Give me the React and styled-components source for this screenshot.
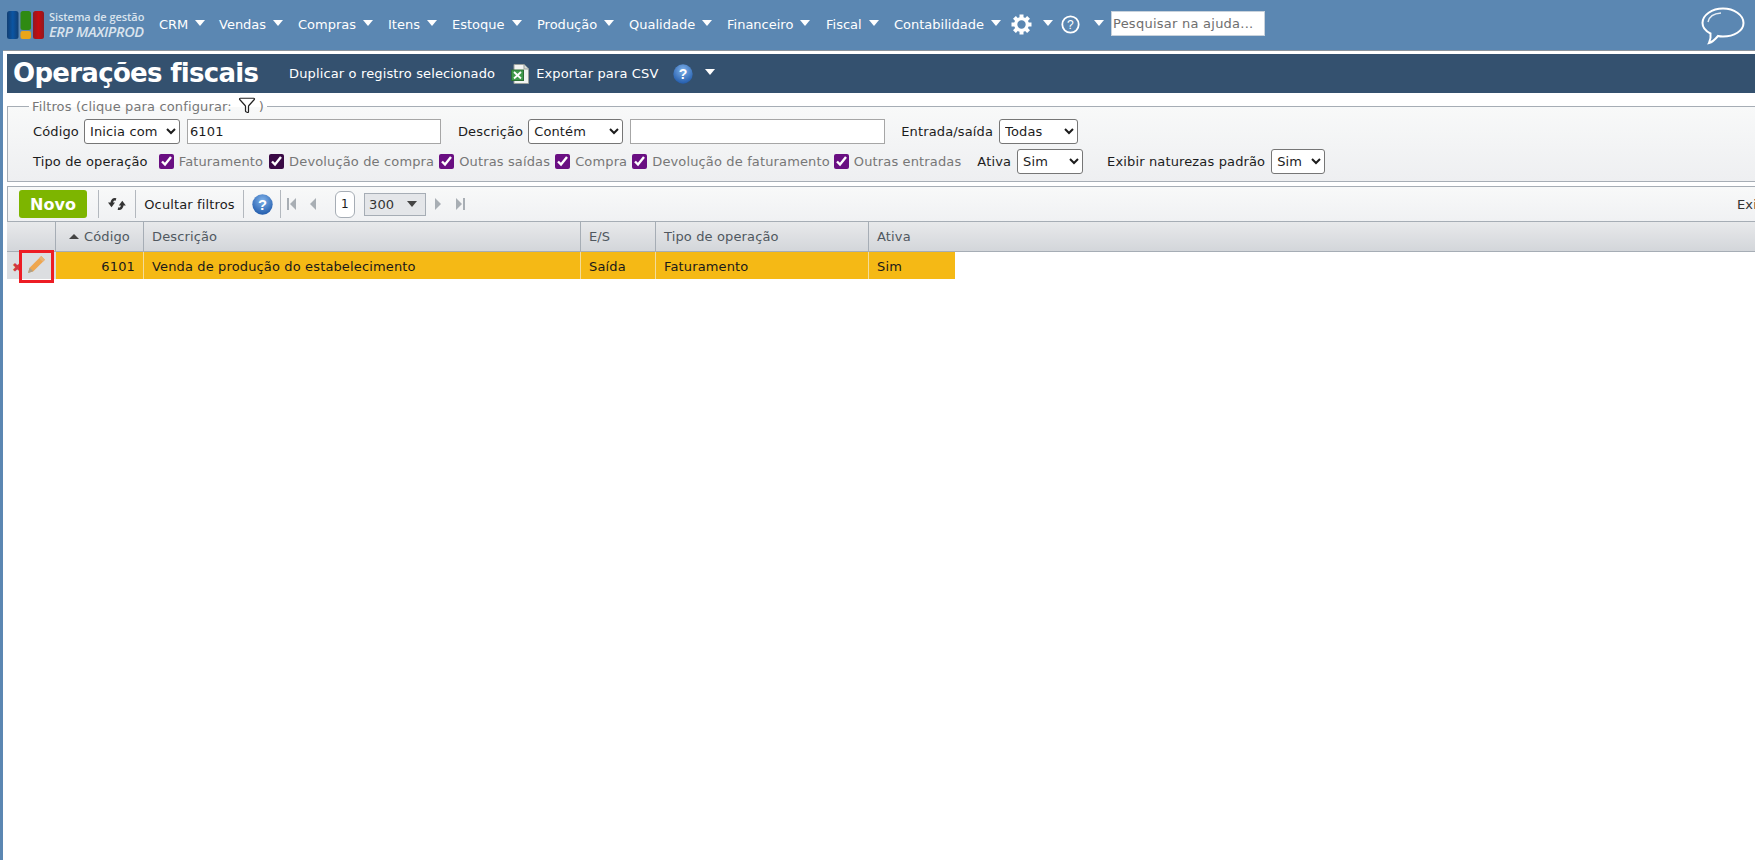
import React from "react";
import styled, { createGlobalStyle } from "styled-components";
import { Filter } from "lucide-react";

const Global = createGlobalStyle`
  html, body { margin: 0; padding: 0; height: 860px; overflow: hidden; background: #fff; }
  body { font-family: "DejaVu Sans", Verdana, sans-serif; font-size: 13px; letter-spacing: 0.14px; }
  * { box-sizing: border-box; }
`;

const Page = styled.div`
  width: 1755px; height: 860px; overflow: hidden; display: flex; flex-direction: column;
  background: #fff; border-left: 3px solid #5b87b2;
`;
const TopBar = styled.header`
  height: 51px; margin-left: -3px; flex: none; background: #5b87b2; border-bottom: 1px solid #8a949e;
  display: flex; align-items: center; position: relative; color: #fff;
`;
const Logo = styled.div`
  width: 159px; padding-left: 7px; display: flex; align-items: center; gap: 5px; flex: none;
`;
const LogoText = styled.div`
  font-family: "Open Sans", sans-serif; display: flex; flex-direction: column; color: #d9e3ed; letter-spacing: 0;
`;
const LogoTop = styled.span`font-size: 11px; font-weight: 600; line-height: 13px; letter-spacing: -0.05px;`;
const LogoBottom = styled.span`font-size: 14.5px; font-weight: 600; font-style: italic; line-height: 17px; letter-spacing: -0.4px;`;
const Menu = styled.nav`display: flex; align-items: center; height: 100%;`;
const MenuItem = styled.div`
  display: flex; align-items: center; gap: 7px; font-size: 13px; color: #fff; white-space: nowrap; letter-spacing: 0;
  width: ${p => p.$w}px; padding-bottom: 1px;
`;
const Caret = styled.span`
  width: 0; height: 0; border-left: 5.5px solid transparent; border-right: 5.5px solid transparent;
  border-top: 6px solid ${p => p.$color || "#fff"}; flex: none; margin-bottom: 4px;
`;
const IconMenu = styled.div`
  display: flex; align-items: center; width: ${p => p.$w}px; gap: ${p => p.$gap}px; padding-bottom: 1px;
`;
const SearchBox = styled.input`
  width: 154px; height: 25px; border: 1px solid #c8d2dc; background: #fff; padding: 0 1px;
  font: 13px "DejaVu Sans", sans-serif; letter-spacing: 0.25px; margin-bottom: 3px;
  &::placeholder { color: #6e6e6e; opacity: 1; }
`;
const Bubble = styled.svg`position: absolute; left: 1701px; top: 7px;`;
const Gap = styled.div`height: 3px; flex: none;`;
const TitleBar = styled.div`
  height: 39px; margin-left: 4px; flex: none; background: #34516f; display: flex; align-items: center; color: #fff;
`;
const Title = styled.h1`
  margin: 0 0 1px 6px; font-size: 26px; font-weight: 700; width: 276px; white-space: nowrap; letter-spacing: -0.7px;
  font-family: "DejaVu Sans", sans-serif;
`;
const TitleAction = styled.span`
  font-size: 13px; white-space: nowrap; display: flex; align-items: center; gap: 6px; margin-right: ${p => p.$mr}px;
`;
const Filters = styled.fieldset`
  margin: 6px 0 0 4px; padding: 0 0 0 25px; height: 83px; flex: none; border: 1px solid #a6adb5; border-right: 0;
  background: linear-gradient(#f8f9f9, #eeeff1); min-width: 0; display: block; position: relative;
`;
const Legend = styled.legend`
  color: #777; font-size: 13px; padding: 0 3px; margin-left: -4px; display: flex; align-items: center; height: 15px; line-height: 15px;
`;
const FilterIcon = styled(Filter)`margin: -3px 3px 0 6px;`;
const FilterRow = styled.div`
  display: flex; align-items: center; height: ${p => p.$h}px; margin-top: ${p => p.$mt || 0}px; white-space: nowrap;
`;
const Label = styled.label`
  color: #1c1c1c; font-size: 13px; margin-right: ${p => p.$mr}px; margin-left: ${p => p.$ml || 0}px;
`;
const Select = styled.select`
  width: ${p => p.$w}px; height: 25px; font: 13px "DejaVu Sans", sans-serif; letter-spacing: 0.14px; background: #fff; color: #1c1c1c;
  border: 1px solid #767676; border-radius: 3px; padding: 0 1px; margin-right: ${p => p.$mr || 0}px;
`;
const TextBox = styled.input`
  width: ${p => p.$w}px; height: 25px; font: 13px "DejaVu Sans", sans-serif; letter-spacing: 0.14px; color: #1c1c1c; background: #fff;
  border: 1px solid #a6a6a6; padding: 0 2px; margin-right: ${p => p.$mr || 0}px;
`;
const Check = styled.input`
  width: 15px; height: 15px; margin: 0 5px 0 ${p => p.$ml}px; accent-color: ${p => p.$color}; flex: none;
`;
const CheckText = styled.span`color: #777; font-size: 13px;`;
const Toolbar = styled.div`
  height: 35px; margin: 4px 0 0 4px; flex: none; display: flex; align-items: center;
  border-top: 1px solid #a6adb5; border-left: 1px solid #a6adb5;
  background: linear-gradient(#f8f9f9, #f0f1f3); color: #1c1c1c; font-size: 13px; padding-left: 11px;
`;
const NewButton = styled.button`
  width: 68px; height: 28px; border: 0; border-radius: 3px; background: #7db500; color: #fff; flex: none;
  font: 700 16px "DejaVu Sans", sans-serif; padding: 0; margin-right: 11px;
`;
const ToolSep = styled.span`width: 1px; height: 28px; background: #b3b8be; flex: none;`;
const ToolCell = styled.div`
  display: flex; align-items: center; justify-content: center; width: ${p => p.$w}px; flex: none; white-space: nowrap; height: 28px;
`;
const PageNum = styled.div`
  width: 20px; height: 27px; border: 1px solid #a6adb5; border-radius: 6px; background: #fff; flex: none;
  display: flex; align-items: center; justify-content: center; margin: 0 9px 0 19px; font-size: 12px;
`;
const PageSize = styled.div`
  width: 62px; height: 23px; border: 1px solid #a6adb5; background: #e4e6e9; flex: none; display: flex; align-items: center;
  justify-content: space-between; padding: 0 8px 0 4px; font-size: 13px; margin-right: 9px; color: #333;
`;
const Pager = styled.svg`flex: none; margin: ${p => p.$m};`;
const Spacer = styled.div`flex: 1;`;
const ClippedText = styled.div`width: 18px; white-space: nowrap; flex: none; color: #333;`;
const HeaderRow = styled.div`
  display: grid; grid-template-columns: 49px 88px 437px 75px 213px 1fr; height: 31px; margin-left: 4px; flex: none;
  border-top: 1px solid #a6adb5; border-bottom: 1px solid #a6adb5; background: linear-gradient(#e8e9eb, #d3d6da);
`;
const HeadCell = styled.div`
  display: flex; align-items: center; gap: 5px; padding-left: ${p => p.$pl || 8}px; color: #50585f; font-size: 13px;
  border-right: ${p => (p.$last ? "0" : "1px solid #a6adb5")};
`;
const SortUp = styled.span`
  width: 0; height: 0; border-left: 5px solid transparent; border-right: 5px solid transparent; border-bottom: 5px solid #444;
`;
const DataRow = styled.div`
  display: grid; grid-template-columns: 49px 88px 437px 75px 213px 86px; height: 27px; margin-left: 4px; flex: none; position: relative;
`;
const ActionCell = styled.div`background: #dcdee1; position: relative;`;
const DataCell = styled.div`
  display: flex; align-items: center; background: #f5b915; color: #1a1a1a; font-size: 13px; padding: 1px 8px 0;
  justify-content: ${p => (p.$right ? "flex-end" : "flex-start")};
  border-right: ${p => (p.$last ? "0" : "1px solid #f3dc9a")};
`;
const DeleteMark = styled.span`
  position: absolute; left: 5px; top: 9px; color: #d2383f; font-size: 13px; line-height: 13px; font-weight: 700;
`;
const PencilIcon = styled.svg`position: absolute; left: 20px; top: 3px; opacity: 0.9;`;
const Highlight = styled.div`
  position: absolute; left: 12px; top: -2px; width: 35px; height: 33px; border: 3px solid #ed1c24; z-index: 2;
`;

const Help = ({ size = 20 }) => (
  <svg width={size} height={size} viewBox="0 0 20 20">
    <defs>
      <radialGradient id="hb" cx="50%" cy="30%" r="75%">
        <stop offset="0" stopColor="#7fb2ea" />
        <stop offset="1" stopColor="#1c56a8" />
      </radialGradient>
    </defs>
    <circle cx="10" cy="10" r="9.7" fill="url(#hb)" />
    <text x="10" y="15" textAnchor="middle" fill="#fff" fontSize="14" fontWeight="700" fontFamily="Liberation Sans">?</text>
  </svg>
);

const Gear = () => (
  <svg width="21" height="21" viewBox="0 0 21 21" fill="#fff">
    {[0, 45, 90, 135, 180, 225, 270, 315].map(a => (
      <rect key={a} x="8.5" y="0.5" width="4" height="5" transform={`rotate(${a} 10.5 10.5)`} />
    ))}
    <circle cx="10.5" cy="10.5" r="5.8" fill="none" stroke="#fff" strokeWidth="3.2" />
  </svg>
);

const Refresh = () => (
  <svg width="18" height="16" viewBox="0 0 18 16" fill="#333">
    <path d="M8 3.4C5.4 2.6 4 4.4 3.7 7" fill="none" stroke="#333" strokeWidth="2.6" />
    <path d="M0 6.5H7L3.5 11.2Z" />
    <path d="M10 12.6C12.6 13.4 14 11.6 14.3 9" fill="none" stroke="#333" strokeWidth="2.6" />
    <path d="M10.8 9.5H17.8L14.3 4.8Z" />
  </svg>
);

const Xls = () => (
  <svg width="19" height="20" viewBox="0 0 19 20">
    <path d="M3 .5H13L17.5 5V19.5H3Z" fill="#f2f4f2" stroke="#9aa19c" />
    <path d="M13 .5V5H17.5" fill="#d6dbd6" stroke="#9aa19c" />
    <rect x="0.5" y="6" width="12" height="10.5" fill="#3f9a4a" stroke="#2c6e35" />
    <path d="M3 8L10 14.5M10 8L3 14.5" stroke="#fff" strokeWidth="1.8" />
  </svg>
);

const App = () => (
  <Page>
    <Global />
    <TopBar>
      <Logo>
        <svg width="37" height="30" viewBox="0 0 37 30">
          <defs>
            <linearGradient id="lb" x1="0" x2="1" y1="0" y2="0"><stop offset="0" stopColor="#123f73" /><stop offset=".5" stopColor="#0b55a3" /><stop offset="1" stopColor="#123f73" /></linearGradient>
            <linearGradient id="lr" x1="0" x2="1" y1="0" y2="0"><stop offset="0" stopColor="#8e1a22" /><stop offset=".5" stopColor="#c80b0e" /><stop offset="1" stopColor="#8e1a22" /></linearGradient>
          </defs>
          <rect x="0" y="1" width="11.5" height="28" rx="2.5" fill="url(#lb)" />
          <rect x="13.5" y="1" width="10.5" height="19" rx="2.5" fill="#2f8a12" />
          <rect x="13.5" y="21" width="10.5" height="8" rx="2" fill="#eaa51a" />
          <rect x="26" y="1" width="11" height="28" rx="2.5" fill="url(#lr)" />
        </svg>
        <LogoText>
          <LogoTop>Sistema de gestão</LogoTop>
          <LogoBottom>ERP MAXIPROD</LogoBottom>
        </LogoText>
      </Logo>
      <Menu>
        {[["CRM", 60], ["Vendas", 79], ["Compras", 90], ["Itens", 64], ["Estoque", 85], ["Produção", 92], ["Qualidade", 98], ["Financeiro", 99], ["Fiscal", 68], ["Contabilidade", 117]].map(([t, w]) => (
          <MenuItem key={t} $w={w}>{t}<Caret /></MenuItem>
        ))}
        <IconMenu $w={50} $gap={11}>
          <Gear />
          <Caret />
        </IconMenu>
        <IconMenu $w={50} $gap={14}>
          <svg width="19" height="19" viewBox="0 0 19 19">
            <circle cx="9.5" cy="9.5" r="8.2" fill="none" stroke="#fff" strokeWidth="1.8" />
            <text x="9.5" y="14" textAnchor="middle" fill="#fff" fontSize="12" fontFamily="Liberation Sans">?</text>
          </svg>
          <Caret />
        </IconMenu>
        <SearchBox placeholder="Pesquisar na ajuda..." />
      </Menu>
      <Bubble width="44" height="38" viewBox="0 0 44 38" fill="none">
        <path d="M22 1.5C33 1.5 42.5 8 42.5 16C42.5 24 33 29.5 22 29.5C20 29.5 18.5 29.4 17 29C14.5 32 11.5 35 8 36C9.5 33 10 30 9.5 26.5C4.5 24 1.5 20.5 1.5 16C1.5 8 11 1.5 22 1.5Z" stroke="#fff" strokeWidth="2" />
        <path d="M7 15C8 10 13 6.5 20 6" stroke="#e8eef5" strokeWidth="1.4" />
      </Bubble>
    </TopBar>
    <Gap />
    <TitleBar>
      <Title>Operações fiscais</Title>
      <TitleAction $mr={16}>Duplicar o registro selecionado</TitleAction>
      <TitleAction $mr={15}><Xls />Exportar para CSV</TitleAction>
      <Help />
      <Caret style={{ marginLeft: 12 }} />
    </TitleBar>
    <Filters>
      <Legend>Filtros (clique para configurar:<FilterIcon size={18} color="#222" strokeWidth={1.6} />)</Legend>
      <FilterRow $h={25} $mt={5}>
        <Label $mr={5}>Código</Label>
        <Select $w={96} $mr={7} defaultValue="a"><option value="a">Inicia com</option></Select>
        <TextBox $w={254} $mr={17} defaultValue="6101" />
        <Label $mr={5}>Descrição</Label>
        <Select $w={95} $mr={7} defaultValue="a"><option value="a">Contém</option></Select>
        <TextBox $w={255} $mr={16} />
        <Label $mr={6}>Entrada/saída</Label>
        <Select $w={79} defaultValue="a"><option value="a">Todas</option></Select>
      </FilterRow>
      <FilterRow $h={25} $mt={5}>
        <Label $mr={0}>Tipo de operação</Label>
        <Check type="checkbox" defaultChecked $ml={11} $color="#6a0f82" /><CheckText>Faturamento</CheckText>
        <Check type="checkbox" defaultChecked $ml={6} $color="#3a0a45" /><CheckText>Devolução de compra</CheckText>
        <Check type="checkbox" defaultChecked $ml={5} $color="#6a0f82" /><CheckText>Outras saídas</CheckText>
        <Check type="checkbox" defaultChecked $ml={5} $color="#6a0f82" /><CheckText>Compra</CheckText>
        <Check type="checkbox" defaultChecked $ml={5} $color="#6a0f82" /><CheckText>Devolução de faturamento</CheckText>
        <Check type="checkbox" defaultChecked $ml={4} $color="#6a0f82" /><CheckText>Outras entradas</CheckText>
        <Label $ml={16} $mr={6}>Ativa</Label>
        <Select $w={66} $mr={24} defaultValue="a"><option value="a">Sim</option></Select>
        <Label $mr={6}>Exibir naturezas padrão</Label>
        <Select $w={54} defaultValue="a"><option value="a">Sim</option></Select>
      </FilterRow>
    </Filters>
    <Toolbar>
      <NewButton>Novo</NewButton>
      <ToolSep />
      <ToolCell $w={36}><Refresh /></ToolCell>
      <ToolSep />
      <ToolCell $w={107}>Ocultar filtros</ToolCell>
      <ToolSep />
      <ToolCell $w={36}><Help size={21} /></ToolCell>
      <ToolSep />
      <Pager width="9" height="12" viewBox="0 0 9 12" $m="0 0 0 6px" fill="#a8aeb4"><rect width="2" height="12" /><path d="M9 0V12L3 6Z" /></Pager>
      <Pager width="6" height="12" viewBox="0 0 6 12" $m="0 0 0 14px" fill="#a8aeb4"><path d="M6 0V12L0 6Z" /></Pager>
      <PageNum>1</PageNum>
      <PageSize>300<Caret $color="#444" style={{ marginBottom: 0 }} /></PageSize>
      <Pager width="6" height="12" viewBox="0 0 6 12" $m="0" fill="#a8aeb4"><path d="M0 0V12L6 6Z" /></Pager>
      <Pager width="9" height="12" viewBox="0 0 9 12" $m="0 0 0 15px" fill="#a8aeb4"><path d="M0 0V12L6 6Z" /><rect x="7" width="2" height="12" /></Pager>
      <Spacer />
      <ClippedText>Exi</ClippedText>
    </Toolbar>
    <HeaderRow>
      <HeadCell />
      <HeadCell $pl={13}><SortUp />Código</HeadCell>
      <HeadCell>Descrição</HeadCell>
      <HeadCell>E/S</HeadCell>
      <HeadCell>Tipo de operação</HeadCell>
      <HeadCell $last>Ativa</HeadCell>
    </HeaderRow>
    <DataRow>
      <ActionCell>
        <DeleteMark>✖</DeleteMark>
        <PencilIcon width="19" height="19" viewBox="0 0 18 18">
          <path d="M13.5 1L17 4.5L6 15.5L1 17L2.5 12Z" fill="#f0a040" />
          <path d="M13.5 1L17 4.5L15 6.5L11.5 3Z" fill="#e8b070" />
          <path d="M2.5 12L6 15.5L1 17Z" fill="#a89a80" />
        </PencilIcon>
        <Highlight />
      </ActionCell>
      <DataCell $right>6101</DataCell>
      <DataCell>Venda de produção do estabelecimento</DataCell>
      <DataCell>Saída</DataCell>
      <DataCell>Faturamento</DataCell>
      <DataCell $last>Sim</DataCell>
    </DataRow>
  </Page>
);

export default App;
